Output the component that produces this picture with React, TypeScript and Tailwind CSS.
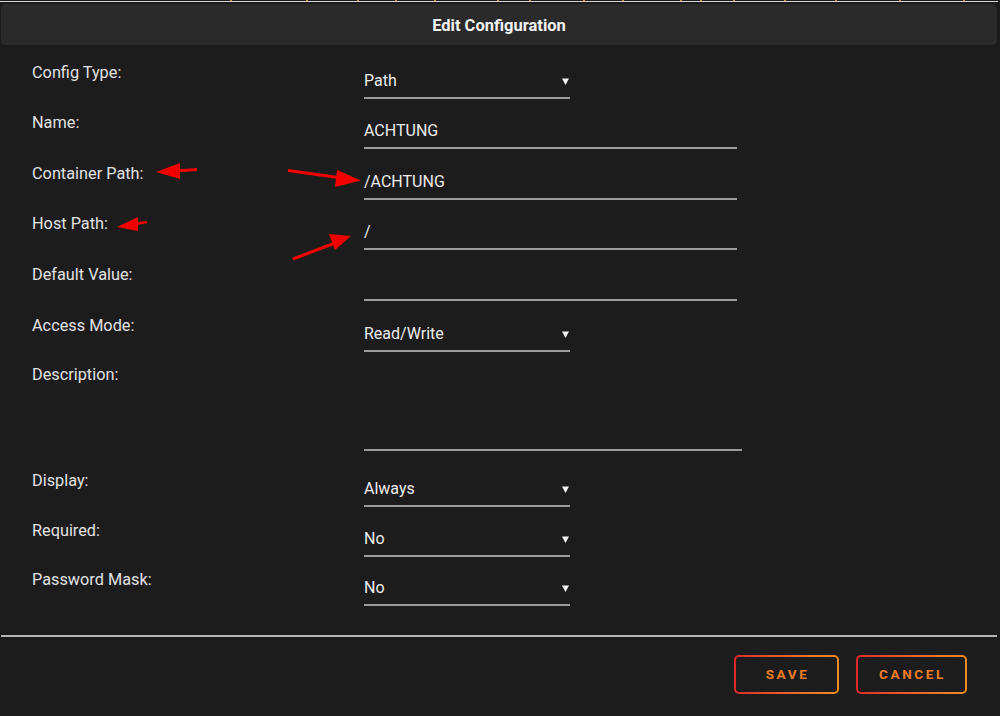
const FONT = "font-['Roboto',_'DejaVu_Sans',_sans-serif]";

type Field = {
  label: string;
  kind: 'select' | 'text' | 'area';
  value?: string;
  h: string;
};

const FIELDS: Field[] = [
  { label: 'Config Type:', kind: 'select', value: 'Path', h: 'h-[50px]' },
  { label: 'Name:', kind: 'text', value: 'ACHTUNG', h: 'h-[51px]' },
  { label: 'Container Path:', kind: 'text', value: '/ACHTUNG', h: 'h-[50px]' },
  { label: 'Host Path:', kind: 'text', value: '/', h: 'h-[51px]' },
  { label: 'Default Value:', kind: 'text', value: '', h: 'h-[51px]' },
  { label: 'Access Mode:', kind: 'select', value: 'Read/Write', h: 'h-[49px]' },
  { label: 'Description:', kind: 'area', h: 'h-[106px]' },
  { label: 'Display:', kind: 'select', value: 'Always', h: 'h-[50px]' },
  { label: 'Required:', kind: 'select', value: 'No', h: 'h-[49px]' },
  { label: 'Password Mask:', kind: 'select', value: 'No', h: 'h-[50px]' },
];

// bits of the page behind the modal peeking out at the top edge
const SPECKS = [230, 306, 357, 395, 434, 497, 529, 583, 622, 680, 700, 733, 784, 835, 899, 963];

function Caret() {
  return (
    <svg width="7" height="7" viewBox="0 0 7 7" className="shrink-0">
      <path d="M0 0.5 H7 L3.5 7 Z" fill="#f2f2f2" />
    </svg>
  );
}

function Input({ f }: { f: Field }) {
  if (f.kind === 'area') {
    return (
      <div className="mt-[8px] w-[378px] h-[78px] border-b-2 border-[#9c9c9c]" />
    );
  }
  const width = f.kind === 'select' ? 'w-[206px]' : 'w-[373px]';
  return (
    <div className={`mt-[8px] ${width} flex items-center justify-between pr-[1px] pb-[6px] border-b-2 border-[#9c9c9c]`}>
      <span className="text-[16px] leading-[20px] text-[#ededed] h-[20px]">{f.value}</span>
      {f.kind === 'select' && <Caret />}
    </div>
  );
}

function GradientButton({ label, width }: { label: string; width: string }) {
  return (
    <div className={`${width} h-[39px] rounded-[5px] p-[2px] bg-gradient-to-r from-[#e0262a] to-[#f28a26]`}>
      <div className="w-full h-full rounded-[3px] bg-[#1c1c1c] flex items-center justify-center">
        <span className="text-[13.5px] font-bold tracking-[2.6px] text-[#f27c26] pl-[2px]">{label}</span>
      </div>
    </div>
  );
}

function Arrows() {
  return (
    <svg className="absolute inset-0 pointer-events-none" width="1000" height="716" viewBox="0 0 1000 716">
      <g fill="#f20000" stroke="#f20000">
        {/* container path label */}
        <line x1="197" y1="169.5" x2="175" y2="171" strokeWidth="3" />
        <polygon points="156,172 180,163 180,179" stroke="none" />
        {/* host path label */}
        <line x1="147" y1="222" x2="132" y2="224.5" strokeWidth="2.5" />
        <polygon points="117,227 138,217 138,231" stroke="none" />
        {/* container path value */}
        <line x1="288" y1="170.5" x2="342" y2="178" strokeWidth="3" />
        <polygon points="361,180.5 337,170 335,187" stroke="none" />
        {/* host path value */}
        <line x1="293" y1="259" x2="335" y2="243" strokeWidth="3" />
        <polygon points="351,236 329,234 335,250" stroke="none" />
      </g>
    </svg>
  );
}

export default function App() {
  return (
    <div className={`relative w-[1000px] h-[716px] overflow-hidden bg-[#1c1c1c] ${FONT}`}>
      <div className="relative h-[1px] bg-[#1c1c1c]">
        {SPECKS.map((x) => (
          <span key={x} className="absolute top-0 h-[1px] w-[2px] bg-[#c98a2c]" style={{ left: x }} />
        ))}
      </div>
      <div className="h-[1px] w-[998px] bg-[#d4d4d4]" />

      <div className="w-[996px] ml-[1px] mt-[2px]">
        <div className="h-[41px] pt-[4px] rounded-[5px] bg-[#2a2a2a] flex items-center justify-center">
          <span className="text-[16.5px] font-bold text-[#f2f2f2]">Edit Configuration</span>
        </div>

        <div className="pt-[18px]">
          {FIELDS.map((f) => (
            <div key={f.label} className={`flex items-start ${f.h}`}>
              <div className="w-[363px] pl-[31px] text-[16.3px] leading-[20px] text-[#e2e2e2]">{f.label}</div>
              <Input f={f} />
            </div>
          ))}
        </div>

        <div className="mt-[15px] h-[2px] bg-[#b4b4b4]" />

        <div className="flex justify-end gap-[17px] pt-[18px] pr-[30px]">
          <GradientButton label="SAVE" width="w-[105px]" />
          <GradientButton label="CANCEL" width="w-[111px]" />
        </div>
      </div>

      <Arrows />
    </div>
  );
}
